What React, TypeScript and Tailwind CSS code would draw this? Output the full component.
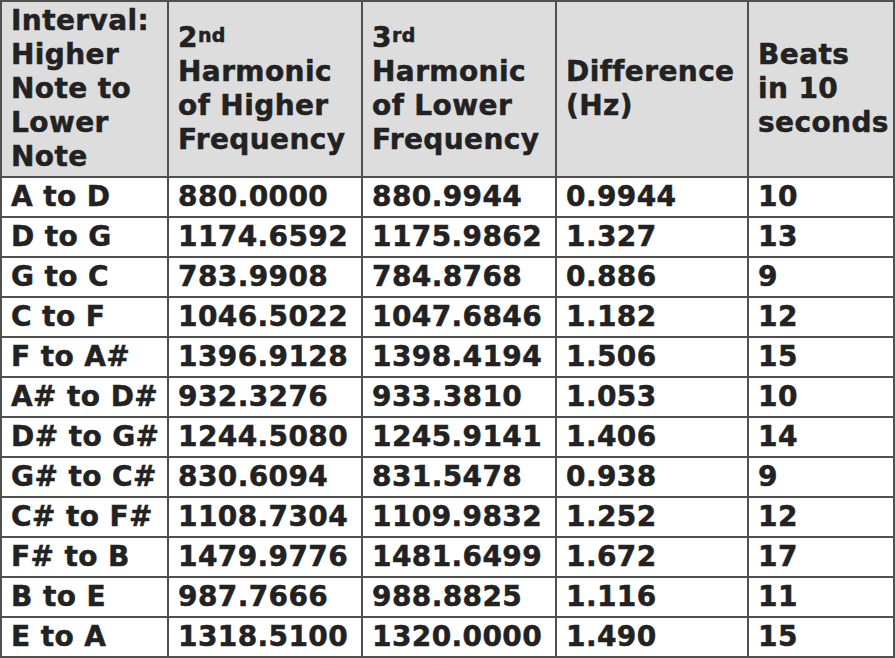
import React from "react";

const rows = [
  ["A to D", "880.0000", "880.9944", "0.9944", "10"],
  ["D to G", "1174.6592", "1175.9862", "1.327", "13"],
  ["G to C", "783.9908", "784.8768", "0.886", "9"],
  ["C to F", "1046.5022", "1047.6846", "1.182", "12"],
  ["F to A#", "1396.9128", "1398.4194", "1.506", "15"],
  ["A# to D#", "932.3276", "933.3810", "1.053", "10"],
  ["D# to G#", "1244.5080", "1245.9141", "1.406", "14"],
  ["G# to C#", "830.6094", "831.5478", "0.938", "9"],
  ["C# to F#", "1108.7304", "1109.9832", "1.252", "12"],
  ["F# to B", "1479.9776", "1481.6499", "1.672", "17"],
  ["B to E", "987.7666", "988.8825", "1.116", "11"],
  ["E to A", "1318.5100", "1320.0000", "1.490", "15"],
];

export default function App() {
  const th = "border-2 border-[#505050] pl-[9px] pr-[6px] align-middle text-left font-bold";
  const td = "border-2 border-[#505050] pl-[9px] pr-[6px] h-[40px] align-middle font-bold";
  const sup = "text-[19px] leading-none align-[5px]";

  return (
    <div className="w-[895px] h-[658px] bg-white overflow-hidden">
      <table
        className="table-fixed border-collapse w-[893px] text-[28px] leading-[34px] text-[#222222] tracking-[0.4px] [-webkit-text-stroke:0.5px_#222222]"
        style={{ fontFamily: '"DejaVu Sans", Verdana, sans-serif' }}
      >
        <colgroup>
          <col className="w-[167px]" />
          <col className="w-[194px]" />
          <col className="w-[194px]" />
          <col className="w-[192px]" />
          <col className="w-[146px]" />
        </colgroup>
        <thead>
          <tr className="bg-[#dddddd] h-[176px]">
            <th className={th}>
              Interval:
              <br />
              Higher
              <br />
              Note to
              <br />
              Lower
              <br />
              Note
            </th>
            <th className={th}>
              2<span className={sup}>nd</span>
              <br />
              Harmonic
              <br />
              of Higher
              <br />
              Frequency
            </th>
            <th className={th}>
              3<span className={sup}>rd</span>
              <br />
              Harmonic
              <br />
              of Lower
              <br />
              Frequency
            </th>
            <th className={th}>
              Difference
              <br />
              (Hz)
            </th>
            <th className={th}>
              Beats
              <br />
              in 10
              <br />
              seconds
            </th>
          </tr>
        </thead>
        <tbody>
          {rows.map((r, idx) => (
            <tr key={idx}>
              {r.map((cell, i) => (
                <td key={i} className={td}>
                  {cell}
                </td>
              ))}
            </tr>
          ))}
        </tbody>
      </table>
    </div>
  );
}
